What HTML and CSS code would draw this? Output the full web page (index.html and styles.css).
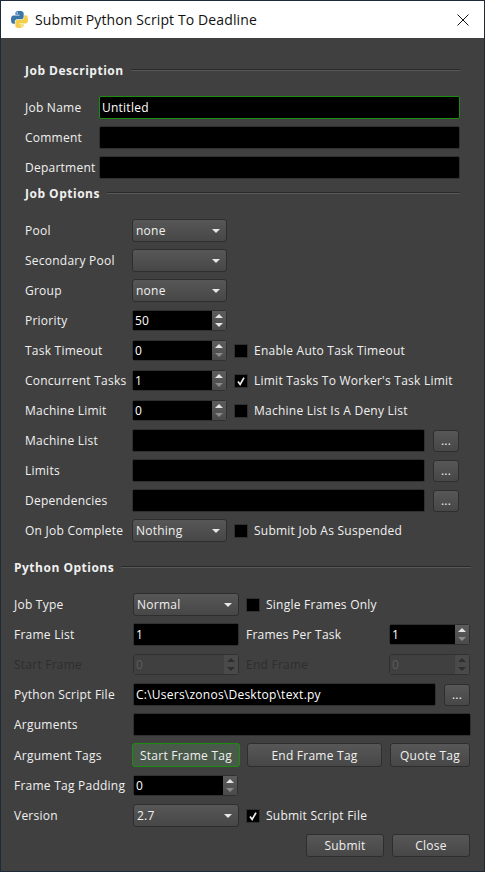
FILE: index.html
```html
<!doctype html>
<html lang="en">
    <head>
        <meta charset="UTF-8" />
        <title>Submit Python Script To Deadline</title>
        <link rel="stylesheet" href="styles.css">
    </head>
    <body>
        <div class="window">
            <div class="titlebar">
                <svg class="app-icon" viewBox="0 0 110 110">
                    <path fill="#3a76a8" d="M54.9 0C26.8 0 28.6 12.2 28.6 12.2v12.6h26.8v3.8H17.9S0 26.6 0 55c0 28.4 15.7 27.4 15.7 27.4h9.3V69.2s-.5-15.7 15.4-15.7h26.6s14.9.2 14.9-14.4V14.9S84.2 0 54.9 0zM40.1 8.5a4.8 4.8 0 1 1 0 9.6 4.8 4.8 0 0 1 0-9.6z"/>
                    <path fill="#f5cf4a" transform="rotate(180 55 55)" d="M54.9 0C26.8 0 28.6 12.2 28.6 12.2v12.6h26.8v3.8H17.9S0 26.6 0 55c0 28.4 15.7 27.4 15.7 27.4h9.3V69.2s-.5-15.7 15.4-15.7h26.6s14.9.2 14.9-14.4V14.9S84.2 0 54.9 0zM40.1 8.5a4.8 4.8 0 1 1 0 9.6 4.8 4.8 0 0 1 0-9.6z"/>
                </svg>
                <span class="title">Submit Python Script To Deadline</span>
                <svg class="close-icon" viewBox="0 0 12 12">
                    <path d="M0.5 0.5L11.5 11.5M11.5 0.5L0.5 11.5" stroke="#111" fill="none"/>
                </svg>
            </div>

            <div class="content">
                <div class="section job-section">
                    <div class="heading bleed"><span>Job Description</span><div class="rule"></div></div>
                    <div class="rows bleed">
                        <div class="row">
                            <label class="name desc-name">Job Name</label>
                            <div class="field grow focused">Untitled</div>
                        </div>
                        <div class="row">
                            <label class="name desc-name">Comment</label>
                            <div class="field grow"></div>
                        </div>
                        <div class="row">
                            <label class="name desc-name">Department</label>
                            <div class="field grow"></div>
                        </div>
                    </div>

                    <div class="heading options-heading bleed"><span>Job Options</span><div class="rule"></div></div>
                    <div class="rows">
                        <div class="row">
                            <label class="name opt-name">Pool</label>
                            <div class="combo opt-combo">none<i class="arrow"></i></div>
                        </div>
                        <div class="row">
                            <label class="name opt-name">Secondary Pool</label>
                            <div class="combo opt-combo"><i class="arrow"></i></div>
                        </div>
                        <div class="row">
                            <label class="name opt-name">Group</label>
                            <div class="combo opt-combo">none<i class="arrow"></i></div>
                        </div>
                        <div class="row">
                            <label class="name opt-name">Priority</label>
                            <div class="spin opt-combo"><div class="spin-value">50</div><div class="spin-btns"><i class="up"></i><i class="down"></i></div></div>
                        </div>
                        <div class="row">
                            <label class="name opt-name">Task Timeout</label>
                            <div class="spin opt-combo"><div class="spin-value">0</div><div class="spin-btns"><i class="up"></i><i class="down dim"></i></div></div>
                            <div class="check"><span class="box"></span>Enable Auto Task Timeout</div>
                        </div>
                        <div class="row">
                            <label class="name opt-name">Concurrent Tasks</label>
                            <div class="spin opt-combo"><div class="spin-value">1</div><div class="spin-btns"><i class="up"></i><i class="down dim"></i></div></div>
                            <div class="check"><span class="box"><svg viewBox="0 0 14 14"><path d="M3.5 7.5L6 11L10.5 3" stroke="#eee" stroke-width="2" fill="none"/></svg></span>Limit Tasks To Worker's Task Limit</div>
                        </div>
                        <div class="row">
                            <label class="name opt-name">Machine Limit</label>
                            <div class="spin opt-combo"><div class="spin-value">0</div><div class="spin-btns"><i class="up"></i><i class="down dim"></i></div></div>
                            <div class="check"><span class="box"></span>Machine List Is A Deny List</div>
                        </div>
                        <div class="row">
                            <label class="name opt-name">Machine List</label>
                            <div class="field grow"></div>
                            <button class="btn dots">...</button>
                        </div>
                        <div class="row">
                            <label class="name opt-name">Limits</label>
                            <div class="field grow"></div>
                            <button class="btn dots">...</button>
                        </div>
                        <div class="row">
                            <label class="name opt-name">Dependencies</label>
                            <div class="field grow"></div>
                            <button class="btn dots">...</button>
                        </div>
                        <div class="row">
                            <label class="name opt-name">On Job Complete</label>
                            <div class="combo opt-combo">Nothing<i class="arrow"></i></div>
                            <div class="check"><span class="box"></span>Submit Job As Suspended</div>
                        </div>
                    </div>
                </div>

                <div class="section python-section">
                    <div class="heading bleed"><span>Python Options</span><div class="rule"></div></div>
                    <div class="rows">
                        <div class="row">
                            <label class="name py-name">Job Type</label>
                            <div class="combo py-combo">Normal<i class="arrow"></i></div>
                            <div class="check"><span class="box"></span>Single Frames Only</div>
                        </div>
                        <div class="row">
                            <label class="name py-name">Frame List</label>
                            <div class="field py-combo">1</div>
                            <label class="name second-name">Frames Per Task</label>
                            <div class="spin small-spin"><div class="spin-value">1</div><div class="spin-btns"><i class="up"></i><i class="down dim"></i></div></div>
                        </div>
                        <div class="row disabled">
                            <label class="name py-name">Start Frame</label>
                            <div class="spin py-combo"><div class="spin-value">0</div><div class="spin-btns"><i class="up"></i><i class="down"></i></div></div>
                            <label class="name second-name">End Frame</label>
                            <div class="spin small-spin"><div class="spin-value">0</div><div class="spin-btns"><i class="up"></i><i class="down"></i></div></div>
                        </div>
                        <div class="row">
                            <label class="name py-name">Python Script File</label>
                            <div class="field grow">C:\Users\zonos\Desktop\text.py</div>
                            <button class="btn dots">...</button>
                        </div>
                        <div class="row bleed">
                            <label class="name py-name">Arguments</label>
                            <div class="field grow"></div>
                        </div>
                        <div class="row tags-row">
                            <label class="name tag-name">Argument Tags</label>
                            <button class="btn tag-start focused">Start Frame Tag</button>
                            <button class="btn tag-end">End Frame Tag</button>
                            <button class="btn tag-quote">Quote Tag</button>
                        </div>
                        <div class="row">
                            <label class="name py-name">Frame Tag Padding</label>
                            <div class="spin py-spin"><div class="spin-value">0</div><div class="spin-btns"><i class="up"></i><i class="down dim"></i></div></div>
                        </div>
                        <div class="row">
                            <label class="name py-name">Version</label>
                            <div class="combo py-combo">2.7<i class="arrow"></i></div>
                            <div class="check"><span class="box"><svg viewBox="0 0 14 14"><path d="M3.5 7.5L6 11L10.5 3" stroke="#eee" stroke-width="2" fill="none"/></svg></span>Submit Script File</div>
                        </div>
                        <div class="row actions">
                            <button class="btn action">Submit</button>
                            <button class="btn action">Close</button>
                        </div>
                    </div>
                </div>
            </div>
        </div>
    </body>
</html>
```

FILE: styles.css
```css
html, body {
    height: 100%;
}
body {
    margin: 0;
    padding: 1px;
    box-sizing: border-box;
    background-color: #1d2a38;
    font-family: "Open Sans", "Noto Sans", sans-serif;
    font-size: 12px;
    letter-spacing: 0.24px;
    color: #f0f0f0;
    overflow: hidden;
}
.window {
    display: flex;
    flex-direction: column;
    height: 100%;
    background-color: #404040;
}
.titlebar {
    display: flex;
    align-items: center;
    flex: none;
    height: 37px;
    padding: 0 15px 0 10px;
    box-sizing: border-box;
    background-color: #ffffff;
}
.app-icon {
    width: 17px;
    height: 17px;
    margin-right: 7px;
}
.title {
    flex: 1;
    font-size: 14px;
    letter-spacing: 0.12px;
    color: #111111;
}
.close-icon {
    width: 12px;
    height: 12px;
}
.section {
    box-sizing: border-box;
}
.job-section {
    padding: 24px 25px 0 24px;
}
.python-section {
    padding: 17px 14px 0 13px;
}
.bleed {
    margin-right: -1px;
}
.heading {
    display: flex;
    align-items: center;
    gap: 7px;
    height: 16px;
    margin-bottom: 18px;
    font-weight: bold;
    letter-spacing: 0.5px;
}
.options-heading {
    margin-top: 6px;
}
.rule {
    flex: 1;
    border-top: 1px solid #2a2a2a;
    border-bottom: 1px solid #585858;
}
.rows {
    display: flex;
    flex-direction: column;
    gap: 7px;
}
.row {
    display: flex;
    align-items: center;
    height: 23px;
}
.tags-row {
    height: 24px;
}
.name {
    flex: none;
    white-space: nowrap;
}
.desc-name {
    width: 74px;
}
.opt-name {
    width: 107px;
}
.py-name {
    width: 119px;
}
.tag-name {
    width: 118px;
}
.second-name {
    flex: 1;
    margin-left: 7px;
}
.field {
    height: 23px;
    line-height: 21px;
    padding: 0 2px;
    box-sizing: border-box;
    background-color: #000000;
    border: 1px solid #303030;
    border-radius: 2px;
    color: #ffffff;
    white-space: nowrap;
}
.field.grow {
    flex: 1;
}
.field.focused {
    border-color: #1c8c10;
}
.combo {
    display: flex;
    align-items: center;
    justify-content: space-between;
    height: 23px;
    padding: 0 5px 0 3px;
    box-sizing: border-box;
    background: linear-gradient(#575757, #474747);
    border: 1px solid #2e2e2e;
    border-radius: 3px;
}
.arrow {
    margin-left: auto;
    margin-right: 1px;
    border-left: 4px solid transparent;
    border-right: 4px solid transparent;
    border-top: 4px solid #e8e8e8;
}
.opt-combo {
    width: 95px;
}
.py-combo {
    width: 106px;
}
.py-spin {
    width: 105px;
}
.small-spin {
    width: 81px;
}
.spin {
    display: flex;
    flex: none;
    height: 21px;
    box-sizing: border-box;
    border: 1px solid #303030;
    border-radius: 3px;
}
.spin-value {
    flex: 1;
    padding: 0 2px;
    line-height: 19px;
    background-color: #000000;
    color: #ffffff;
}
.spin-btns {
    display: flex;
    flex-direction: column;
    align-items: center;
    justify-content: center;
    gap: 5px;
    width: 14px;
    background: linear-gradient(#5c5c5c, #4a4a4a);
}
.up {
    border-left: 4px solid transparent;
    border-right: 4px solid transparent;
    border-bottom: 4px solid #e4e4e4;
}
.down {
    border-left: 4px solid transparent;
    border-right: 4px solid transparent;
    border-top: 4px solid #e4e4e4;
}
.down.dim {
    border-top-color: #8a8a8a;
}
.check {
    display: flex;
    align-items: center;
    gap: 6px;
    margin-left: 7px;
    white-space: nowrap;
}
.box {
    display: block;
    width: 14px;
    height: 14px;
    box-sizing: border-box;
    background-color: #000000;
    border: 1px solid #303030;
}
.box svg {
    display: block;
    width: 12px;
    height: 12px;
}
.btn {
    height: 22px;
    padding: 0;
    box-sizing: border-box;
    background: linear-gradient(#575757, #474747);
    border: 1px solid #2e2e2e;
    border-radius: 3px;
    color: #f0f0f0;
    font: inherit;
    letter-spacing: inherit;
}
.dots {
    flex: none;
    width: 26px;
    margin-left: 8px;
}
.tag-start {
    width: 108px;
    height: 24px;
}
.tag-start.focused {
    background: #4a5a4a;
    border-color: #1c8c10;
}
.tag-end {
    width: 135px;
    height: 24px;
    margin-left: 7px;
}
.tag-quote {
    width: 80px;
    height: 24px;
    margin-left: 8px;
}
.actions {
    justify-content: flex-end;
    gap: 8px;
}
.action {
    width: 78px;
    height: 23px;
}
.disabled .name {
    color: #2e2e2e;
}
.disabled .spin-value {
    background-color: #404040;
    color: #5c5c5c;
}
.disabled .spin-btns {
    background: #4a4a4a;
}
.disabled .up {
    border-bottom-color: #2e2e2e;
}
.disabled .down {
    border-top-color: #2e2e2e;
}
```
